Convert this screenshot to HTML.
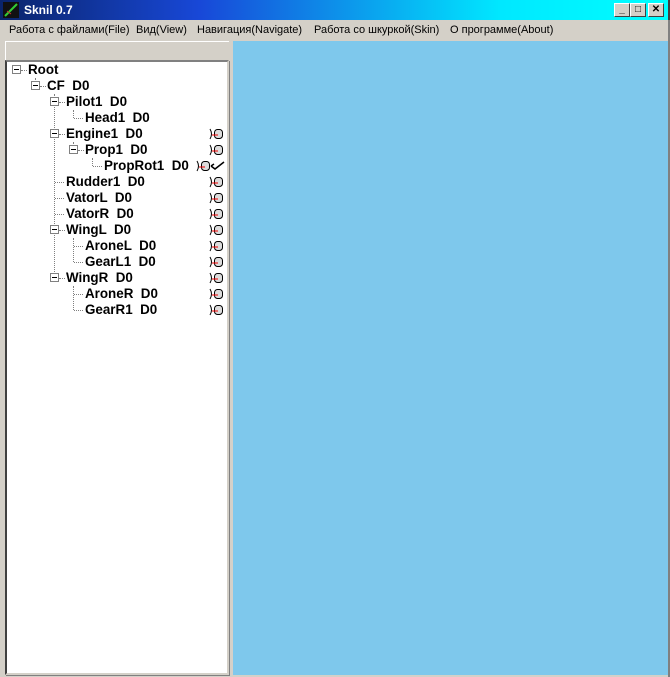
<!DOCTYPE html>
<html><head><meta charset="utf-8"><style>
*{margin:0;padding:0;box-sizing:border-box}
body{width:670px;height:677px;background:#d4d0c8;position:relative;overflow:hidden;font-family:"Liberation Sans",sans-serif}
.title{position:absolute;left:0;top:0;width:670px;height:20px;background:linear-gradient(90deg,#0a246a 0%,#1848d8 30%,#00e8ff 75%,#00ffff 100%);border-right:2px solid #404040}
.title span{position:absolute;left:24px;top:3px;color:#fff;font-weight:bold;font-size:12px}
.btn{position:absolute;top:3px;width:16px;height:14px;background:#d4d0c8;border:1px solid;border-color:#fff #404040 #404040 #fff;font-size:10px;text-align:center;line-height:12px;font-weight:bold}
.menu{position:absolute;top:22px;left:0;height:18px;font-size:11px;color:#000}
.menu span{position:absolute;top:2px;white-space:nowrap}
.hdr{position:absolute;left:5px;top:41px;width:224px;height:19px;background:#d4d0c8;border-left:1px solid #fff;border-top:1px solid #fff}
.tree{position:absolute;left:5px;top:60px;width:224px;height:615px;background:#fff;border:2px solid;border-color:#808080 #d4d0c8 #d4d0c8 #404040;box-shadow:1px 1px 0 #808080}
.blue{position:absolute;left:233px;top:41px;width:435px;height:634px;background:#7ec8ec}
.rb{position:absolute;left:668px;top:20px;width:2px;height:657px;background:#808080}
.t{position:absolute;font-weight:bold;font-size:13.4px;white-space:pre;color:#000;line-height:14px}
.bx{position:absolute;width:9px;height:9px;border:1px solid #808080;background:#fff;z-index:2}
.bx:after{content:"";position:absolute;left:1px;top:3px;width:5px;height:1px;background:#000}
.h{position:absolute;height:1px;border-top:1px dotted #808080}
.v{position:absolute;width:1px;border-left:1px dotted #808080}
.ic{position:absolute;width:16px;height:12px}
</style></head><body>
<div class="title"><svg style="position:absolute;left:3px;top:2px" width="16" height="16"><rect width="16" height="16" fill="#111"/><path d="M2 14 L14 2" stroke="#3c3" stroke-width="2"/><path d="M4 9 L8 12" stroke="#c33" stroke-width="1"/></svg><span>Sknil 0.7</span>
<div class="btn" style="left:614px">_</div><div class="btn" style="left:630px">□</div><div class="btn" style="left:648px">✕</div></div>
<div class="rb"></div>
<div class="menu"><span style="left:9px">Работа с файлами(File)</span><span style="left:136px">Вид(View)</span><span style="left:197px">Навигация(Navigate)</span><span style="left:314px">Работа со шкуркой(Skin)</span><span style="left:450px">О программе(About)</span></div>
<div class="hdr"></div>
<div class="tree"></div>
<div class="blue"></div>
<div id="tr"></div>
<script>
var rows=[[0,"Root",1,0],[1,"CF  D0",1,0],[2,"Pilot1  D0",1,0],[3,"Head1  D0",0,0],[2,"Engine1  D0",1,1],[3,"Prop1  D0",1,1],[4,"PropRot1  D0",0,2],[2,"Rudder1  D0",0,1],[2,"VatorL  D0",0,1],[2,"VatorR  D0",0,1],[2,"WingL  D0",1,1],[3,"AroneL  D0",0,1],[3,"GearL1  D0",0,1],[2,"WingR  D0",1,1],[3,"AroneR  D0",0,1],[3,"GearR1  D0",0,1]];
var h="";
var vl=[[35,78,86],[54,94,278],[73,110,118],[73,142,150],[92,158,166],[73,238,262],[73,286,310]];
vl.forEach(function(v){h+='<div class="v" style="left:'+v[0]+'px;top:'+v[1]+'px;height:'+(v[2]-v[1])+'px"></div>'});
rows.forEach(function(r,i){var y=70+16*i,L=r[0];var bx=12+19*L,tx=28+19*L;
if(r[2]){h+='<div class="bx" style="left:'+bx+'px;top:'+(y-5)+'px"></div><div class="h" style="left:'+(bx+9)+'px;top:'+y+'px;width:'+(tx-bx-10)+'px"></div>';}
else{h+='<div class="h" style="left:'+(bx+5)+'px;top:'+y+'px;width:'+(tx-bx-7)+'px"></div>';}
h+='<div class="t" style="left:'+tx+'px;top:'+(y-7)+'px">'+r[1]+'</div>';
if(r[3]){var ix=r[3]==2?196:209;
h+='<svg class="ic" style="left:'+ix+'px;top:'+(y-6)+'px" viewBox="0 0 16 12"><path d="M1 1 Q4 6 1 11" stroke="#000" fill="none"/><rect x="5.5" y="1.5" width="8" height="9" rx="3" fill="#ddd" stroke="#000"/><path d="M3 7 H9" stroke="#e00"/></svg>';
if(r[3]==2)h+='<svg class="ic" style="left:210px;top:'+(y-6)+'px" viewBox="0 0 16 12"><path d="M1 6 L5 9 L14 2 M1 6 L4 4" stroke="#000" stroke-width="1.5" fill="none"/></svg>';}
});
document.getElementById("tr").innerHTML=h;
</script>
</body></html>
